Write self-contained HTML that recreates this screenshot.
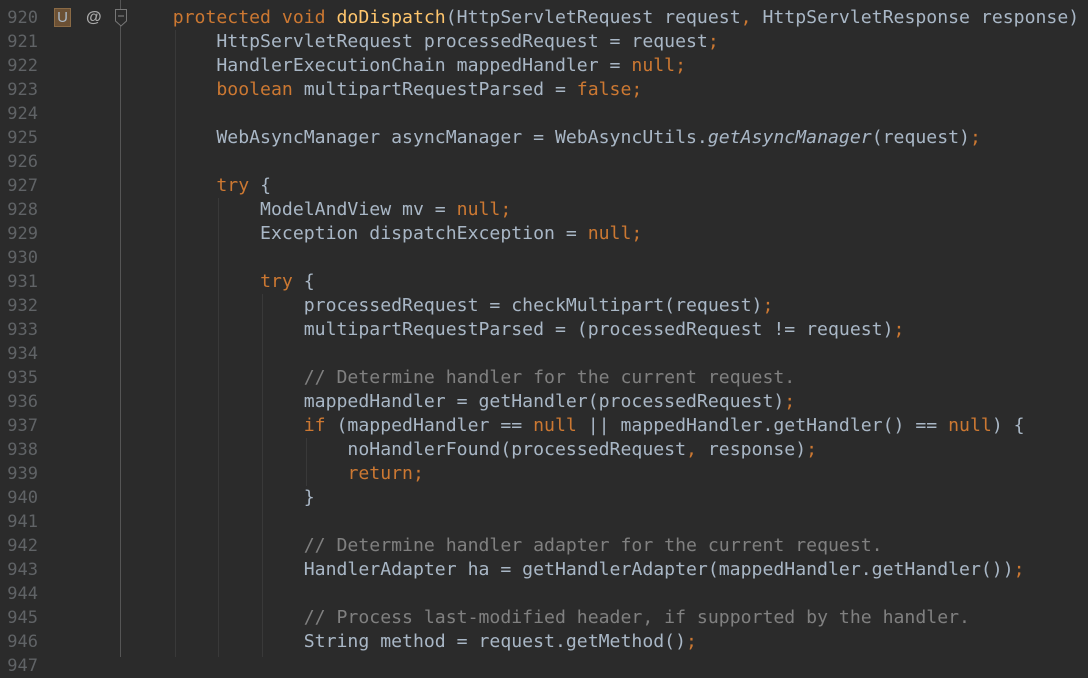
<!DOCTYPE html><html><head><style>
body{margin:0;width:1088px;height:657px;background:#2b2b2b;overflow:hidden;position:relative;font-family:"DejaVu Sans Mono",monospace;font-size:18.15px}
.l{position:absolute;left:129px;height:24px;line-height:24px;white-space:pre;color:#a9b7c6}
.n{position:absolute;left:0;width:38px;text-align:right;height:24px;line-height:24px;color:#606366;font-size:17px}
.k{color:#cc7832}.c{color:#808080}.f{color:#ffc66d}.i{font-style:italic}
.g{position:absolute;width:1px;background:#393939}
</style></head><body>
<div style="position:absolute;left:120px;top:0;width:1px;height:657px;background:#555"></div>
<div style="position:absolute;left:54px;top:8px;width:17px;height:19px;background:#6b5034;border:1px solid #8a6a45;box-sizing:border-box;color:#a9b7c6;font-size:15px;line-height:17px;text-align:center;font-family:'Liberation Sans',sans-serif">U</div>
<div style="position:absolute;left:86px;top:6px;color:#a9a9a9;font-size:16px;line-height:24px;font-family:'Liberation Sans',sans-serif;font-weight:bold">@</div>
<svg style="position:absolute;left:113px;top:8px" width="16" height="20"><path d="M2.5 1.5H13.5V13L8 18L2.5 13Z" fill="#2b2b2b" stroke="#777"/><path d="M5 8H11" stroke="#888"/></svg>
<div class="g" style="left:175px;top:30px;height:627px"></div>
<div class="g" style="left:218px;top:198px;height:459px"></div>
<div class="g" style="left:262px;top:294px;height:363px"></div>
<div class="g" style="left:306px;top:438px;height:48px"></div>
<div id="c"></div>
<script>
const L=[
['920','    <span class="k">protected void </span><span class="f">doDispatch</span>(HttpServletRequest request<span class="k">, </span>HttpServletResponse response)'],
['921','        HttpServletRequest processedRequest = request<span class="k">;</span>'],
['922','        HandlerExecutionChain mappedHandler = <span class="k">null;</span>'],
['923','        <span class="k">boolean </span>multipartRequestParsed = <span class="k">false;</span>'],
['924',''],
['925','        WebAsyncManager asyncManager = WebAsyncUtils.<span class="i">getAsyncManager</span>(request)<span class="k">;</span>'],
['926',''],
['927','        <span class="k">try </span>{'],
['928','            ModelAndView mv = <span class="k">null;</span>'],
['929','            Exception dispatchException = <span class="k">null;</span>'],
['930',''],
['931','            <span class="k">try </span>{'],
['932','                processedRequest = checkMultipart(request)<span class="k">;</span>'],
['933','                multipartRequestParsed = (processedRequest != request)<span class="k">;</span>'],
['934',''],
['935','                <span class="c">// Determine handler for the current request.</span>'],
['936','                mappedHandler = getHandler(processedRequest)<span class="k">;</span>'],
['937','                <span class="k">if </span>(mappedHandler == <span class="k">null </span>|| mappedHandler.getHandler() == <span class="k">null</span>) {'],
['938','                    noHandlerFound(processedRequest<span class="k">, </span>response)<span class="k">;</span>'],
['939','                    <span class="k">return;</span>'],
['940','                }'],
['941',''],
['942','                <span class="c">// Determine handler adapter for the current request.</span>'],
['943','                HandlerAdapter ha = getHandlerAdapter(mappedHandler.getHandler())<span class="k">;</span>'],
['944',''],
['945','                <span class="c">// Process last-modified header, if supported by the handler.</span>'],
['946','                String method = request.getMethod()<span class="k">;</span>'],
['947','']];
let h='';L.forEach((x,i)=>{const t=6+24*i;h+=`<div class="n" style="top:${t}px">${x[0]}</div><div class="l" style="top:${t}px">${x[1]}</div>`});
document.getElementById('c').innerHTML=h;
</script>
</body></html>
